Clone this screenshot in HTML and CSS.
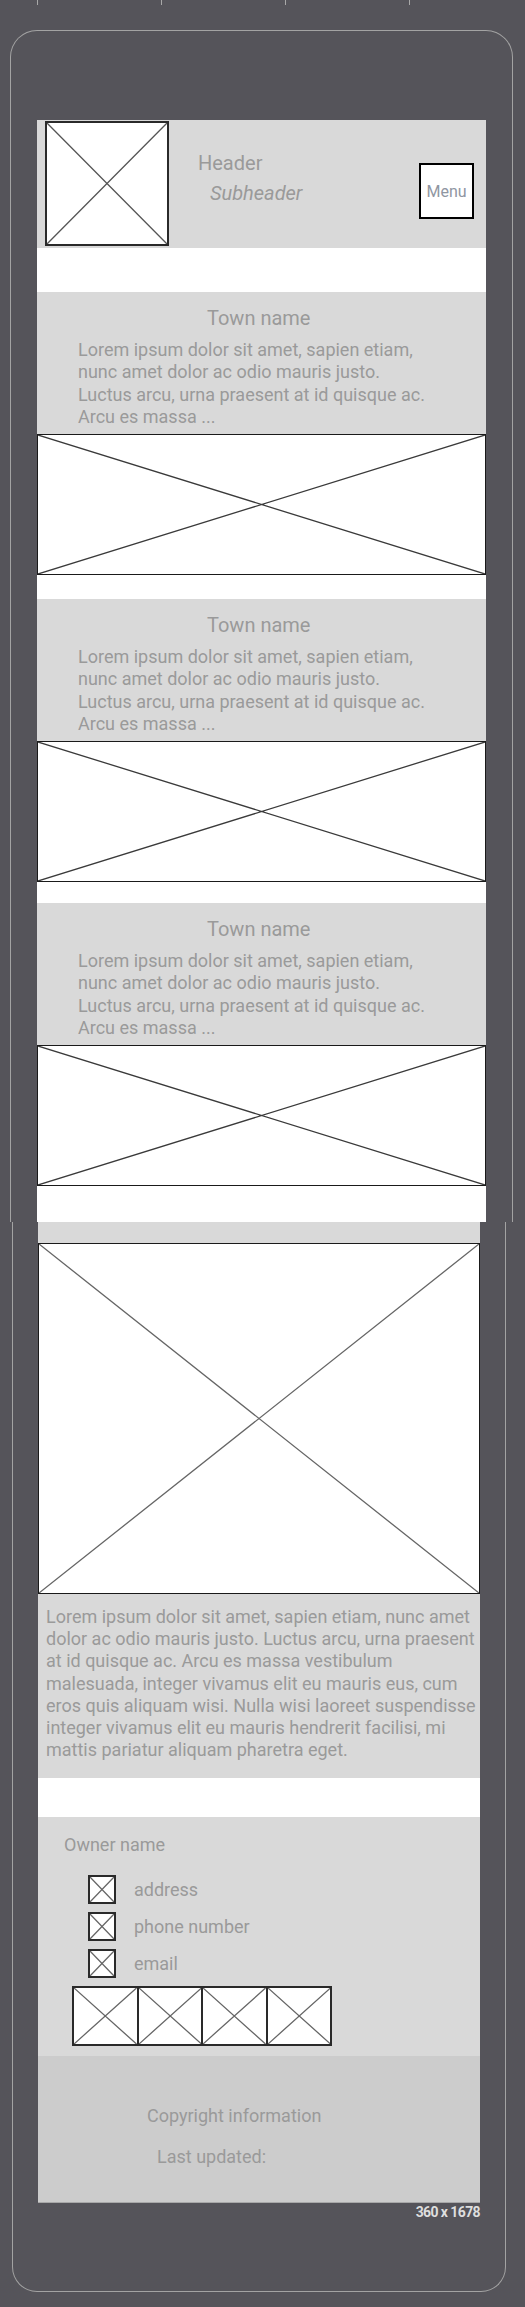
FILE: index.html
```html
<!DOCTYPE html>
<html lang="en">

<head>
    <meta charset="UTF-8">
    <meta name="viewport" content="width=device-width, initial-scale=1.0">
    <title>Town Guide Wireframe</title>
    <link rel="stylesheet" href="styles.css">
</head>

<body>
    <div class="ticks">
        <span></span><span></span><span></span><span></span>
    </div>

    <div class="device device-top">
        <div class="screen">
            <header class="topbar">
                <div class="ph logo">
                    <svg viewBox="0 0 100 100" preserveAspectRatio="none"><path d="M0 0L100 100M100 0L0 100" /></svg>
                </div>
                <div class="titles">
                    <p class="title">Header</p>
                    <p class="subtitle">Subheader</p>
                </div>
                <button class="menu-btn">Menu</button>
            </header>

            <section class="town town-1">
                <div class="town-info">
                    <h2>Town name</h2>
                    <p>Lorem ipsum dolor sit amet, sapien etiam,<br>nunc amet dolor ac odio mauris justo.<br>Luctus arcu, urna praesent at id quisque ac.<br>Arcu es massa ...</p>
                </div>
                <div class="ph town-img">
                    <svg viewBox="0 0 100 100" preserveAspectRatio="none"><path d="M0 0L100 100M100 0L0 100" /></svg>
                </div>
            </section>

            <section class="town town-2">
                <div class="town-info">
                    <h2>Town name</h2>
                    <p>Lorem ipsum dolor sit amet, sapien etiam,<br>nunc amet dolor ac odio mauris justo.<br>Luctus arcu, urna praesent at id quisque ac.<br>Arcu es massa ...</p>
                </div>
                <div class="ph town-img">
                    <svg viewBox="0 0 100 100" preserveAspectRatio="none"><path d="M0 0L100 100M100 0L0 100" /></svg>
                </div>
            </section>

            <section class="town town-3">
                <div class="town-info">
                    <h2>Town name</h2>
                    <p>Lorem ipsum dolor sit amet, sapien etiam,<br>nunc amet dolor ac odio mauris justo.<br>Luctus arcu, urna praesent at id quisque ac.<br>Arcu es massa ...</p>
                </div>
                <div class="ph town-img">
                    <svg viewBox="0 0 100 100" preserveAspectRatio="none"><path d="M0 0L100 100M100 0L0 100" /></svg>
                </div>
            </section>
        </div>
    </div>

    <div class="device device-bottom">
        <div class="screen">
            <div class="feature">
                <div class="ph feature-img">
                    <svg viewBox="0 0 100 100" preserveAspectRatio="none"><path d="M0 0L100 100M100 0L0 100" /></svg>
                </div>
                <p>Lorem ipsum dolor sit amet, sapien etiam, nunc amet dolor ac odio mauris justo. Luctus arcu, urna praesent at id quisque ac. Arcu es massa vestibulum malesuada, integer vivamus elit eu mauris eus, cum eros quis aliquam wisi. Nulla wisi laoreet suspendisse integer vivamus elit eu mauris hendrerit facilisi, mi mattis pariatur aliquam pharetra eget.</p>
            </div>

            <div class="owner">
                <p class="owner-name">Owner name</p>
                <ul class="contacts">
                    <li>
                        <span class="ph check"><svg viewBox="0 0 100 100" preserveAspectRatio="none"><path d="M0 0L100 100M100 0L0 100" /></svg></span>
                        address
                    </li>
                    <li>
                        <span class="ph check"><svg viewBox="0 0 100 100" preserveAspectRatio="none"><path d="M0 0L100 100M100 0L0 100" /></svg></span>
                        phone number
                    </li>
                    <li>
                        <span class="ph check"><svg viewBox="0 0 100 100" preserveAspectRatio="none"><path d="M0 0L100 100M100 0L0 100" /></svg></span>
                        email
                    </li>
                </ul>
                <div class="gallery">
                    <div class="ph cell"><svg viewBox="0 0 100 100" preserveAspectRatio="none"><path d="M0 0L100 100M100 0L0 100" /></svg></div>
                    <div class="ph cell"><svg viewBox="0 0 100 100" preserveAspectRatio="none"><path d="M0 0L100 100M100 0L0 100" /></svg></div>
                    <div class="ph cell"><svg viewBox="0 0 100 100" preserveAspectRatio="none"><path d="M0 0L100 100M100 0L0 100" /></svg></div>
                    <div class="ph cell"><svg viewBox="0 0 100 100" preserveAspectRatio="none"><path d="M0 0L100 100M100 0L0 100" /></svg></div>
                </div>
            </div>

            <footer class="footer">
                <p class="copyright">Copyright information</p>
                <p class="updated">Last updated:</p>
            </footer>
        </div>
        <div class="size-label">360 x 1678</div>
    </div>
</body>

</html>
```

FILE: styles.css
```css
* {
    box-sizing: border-box;
}

body {
    margin: 0;
    background-color: #55545a;
    font-family: Roboto, 'Liberation Sans', sans-serif;
    color: #9a9a9a;
}

p,
h2,
ul {
    margin: 0;
}

/* ruler ticks along the top edge */
.ticks {
    display: flex;
    gap: 123px;
    padding-left: 37px;
    height: 5px;
}

.ticks span {
    width: 1px;
    background-color: #a8a8a8;
}

/* phone frame, drawn as two halves */
.device {
    border: 1px solid #a3a3a3;
}

.device-top {
    margin: 25px 0 0 10px;
    width: 503px;
    height: 1192px;
    border-bottom: none;
    border-radius: 27px 27px 0 0;
    padding: 89px 0 0 26px;
}

.device-top .screen {
    width: 449px;
    background: #ffffff;
    padding-bottom: 36px;
}

.device-bottom {
    margin-left: 12px;
    width: 494px;
    height: 1070px;
    border-top: none;
    border-radius: 0 0 25px 25px;
    padding-left: 25px;
}

.device-bottom .screen {
    width: 442px;
    background: #ffffff;
}

/* placeholder image with a cross */
.ph {
    background: #ffffff;
    border: 1px solid #1a1a1a;
}

.ph svg {
    display: block;
    width: 100%;
    height: 100%;
}

.ph path {
    fill: none;
    stroke: #3a3a3a;
    stroke-width: 1.3;
    vector-effect: non-scaling-stroke;
}

/* header */
.topbar {
    display: flex;
    align-items: flex-start;
    height: 128px;
    background-color: #d9d9d9;
    padding: 1px 12px 0 8px;
    margin-bottom: 44px;
}

.logo {
    width: 124px;
    height: 125px;
    border: 2px solid #2a2a2a;
}

.logo path {
    stroke: #555;
}

.titles {
    margin: 27px 0 0 29px;
    font-size: 20px;
    line-height: 30px;
}

.subtitle {
    font-style: italic;
    padding-left: 12px;
}

.menu-btn {
    margin: 42px 0 0 auto;
    width: 55px;
    height: 56px;
    padding: 0;
    background: #ffffff;
    border: 2px solid #000000;
    font-family: Roboto, sans-serif;
    font-size: 16px;
    color: #8f96a2;
}

/* town cards */
.town-info {
    height: 142px;
    background-color: #d9d9d9;
    padding: 14px 0 0 41px;
}

.town-info h2 {
    font-size: 20px;
    font-weight: 400;
    line-height: 24px;
    padding-left: 129px;
    margin-bottom: 9px;
}

.town-info p {
    font-size: 18px;
    line-height: 22.3px;
}

.town-img {
    height: 141px;
}

.town-1 {
    margin-bottom: 24px;
}

.town-2 {
    margin-bottom: 21px;
}

/* feature block */
.feature {
    background-color: #d9d9d9;
    padding-top: 21px;
    margin-bottom: 39px;
}

.feature-img {
    height: 351px;
}

.feature-img path {
    stroke: #666;
}

.feature p {
    font-size: 18px;
    line-height: 22.2px;
    padding: 12px 0 17px 8px;
    height: 184px;
}

/* owner block */
.owner {
    height: 239px;
    background-color: #d9d9d9;
    padding: 17px 0 0 26px;
}

.owner-name {
    font-size: 18px;
    line-height: 22px;
    margin-bottom: 19px;
}

.contacts {
    list-style-type: none;
    padding: 0 0 0 24px;
    display: flex;
    flex-direction: column;
    gap: 8px;
}

.contacts li {
    display: flex;
    align-items: center;
    gap: 18px;
    font-size: 18px;
    line-height: 22px;
}

.check {
    width: 28px;
    height: 29px;
    border: 2px solid #2a2a2a;
}

.check path {
    stroke: #666;
}

.gallery {
    display: flex;
    width: 260px;
    height: 60px;
    margin: 8px 0 0 8px;
    border: 2px solid #2a2a2a;
}

.cell {
    flex: 1;
    border: none;
    border-left: 2px solid #2a2a2a;
}

.cell:first-child {
    border-left: none;
}

.cell path {
    stroke: #666;
}

/* footer */
.footer {
    height: 147px;
    background-color: #cccccc;
    border-bottom: 1px solid #a8a8a8;
    padding-top: 49px;
    font-size: 18px;
    line-height: 22px;
}

.copyright {
    padding-left: 109px;
    margin-bottom: 19px;
}

.updated {
    padding-left: 119px;
}

.size-label {
    width: 442px;
    text-align: right;
    font-size: 14px;
    font-weight: 700;
    letter-spacing: -0.6px;
    line-height: 16px;
    color: #dedede;
    margin-top: 1px;
}
```
